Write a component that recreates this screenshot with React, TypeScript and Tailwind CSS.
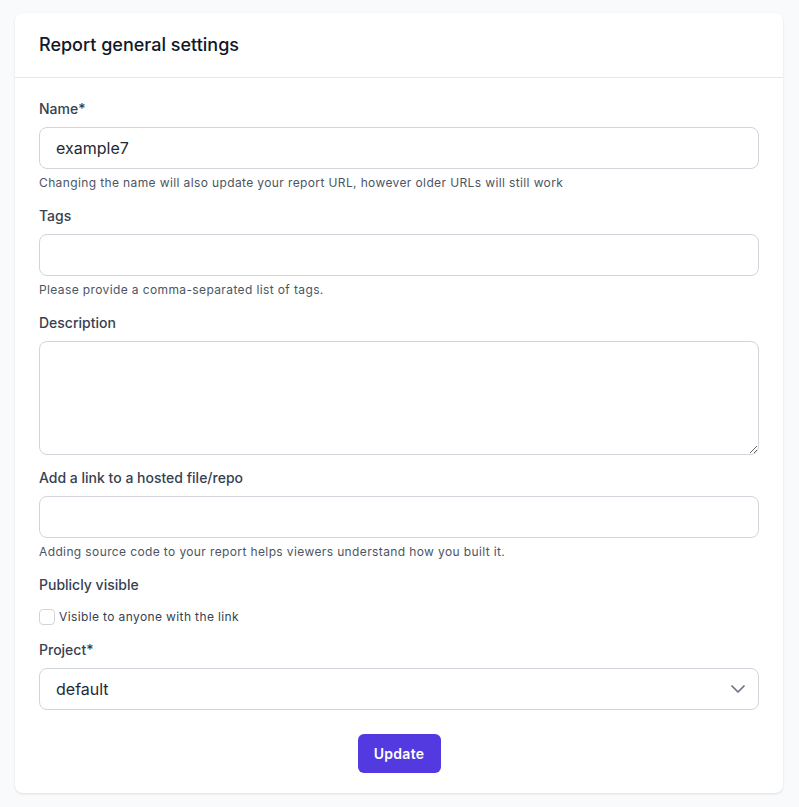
import React from "react";
import { ChevronDown } from "lucide-react";

const inputCls =
  "block w-full h-[42px] rounded-lg border border-[#d1d5db] bg-white px-4 text-[16px] text-[#1f2937] outline-none";

function Label({ children, className = "" }: { children: React.ReactNode; className?: string }) {
  return (
    <label className={`block text-[14px] leading-[20px] font-medium text-[#374151] ${className}`}>
      {children}
    </label>
  );
}

function Help({ children }: { children: React.ReactNode }) {
  return <p className="mt-1.5 text-[12px] leading-[16px] tracking-[0.38px] text-[#4b5563]">{children}</p>;
}

export default function App() {
  return (
    <div className="min-h-[807px] bg-[#f9fafb] pt-[13px] pl-[15px]" style={{ fontFamily: "Inter, 'Noto Sans', sans-serif" }}>
      <div className="w-[768px] rounded-lg bg-white shadow-[0_1px_3px_rgba(0,0,0,0.08),0_1px_2px_rgba(0,0,0,0.04)]">
        <div className="flex h-[65px] items-center border-b border-[#e5e7eb] px-6">
          <h2 className="text-[18px] leading-[28px] font-medium text-[#111827]">Report general settings</h2>
        </div>
        <div className="px-6 pt-[21px] pb-5">
          <div>
            <Label className="mb-2">Name*</Label>
            <input className={inputCls} defaultValue="example7" />
            <Help>Changing the name will also update your report URL, however older URLs will still work</Help>
          </div>
          <div className="mt-[15px]">
            <Label className="mb-2">Tags</Label>
            <input className={inputCls} />
            <Help>Please provide a comma-separated list of tags.</Help>
          </div>
          <div className="mt-[15px]">
            <Label className="mb-2">Description</Label>
            <textarea className="block w-full h-[114px] rounded-lg border border-[#d1d5db] bg-white px-4 py-2 text-[16px] text-[#1f2937] outline-none" />
          </div>
          <div className="mt-[13px]">
            <Label className="mb-2">Add a link to a hosted file/repo</Label>
            <input className={inputCls} />
            <Help>Adding source code to your report helps viewers understand how you built it.</Help>
          </div>
          <div className="mt-[15px]">
            <Label className="mb-3">Publicly visible</Label>
            <label className="flex h-[20px] items-center">
              <input
                type="checkbox"
                className="h-4 w-4 appearance-none rounded-[4px] border border-[#d1d5db] bg-white"
              />
              <span className="ml-1 text-[12px] leading-[16px] tracking-[0.38px] text-[#374151]">Visible to anyone with the link</span>
            </label>
          </div>
          <div className="mt-[13px]">
            <Label className="mb-2">Project*</Label>
            <div className="relative">
              <select className={`${inputCls} appearance-none`} defaultValue="default">
                <option value="default">default</option>
              </select>
              <ChevronDown
                size={24}
                strokeWidth={1.75}
                className="pointer-events-none absolute right-[9px] top-[9px] text-[#6b7280]"
              />
            </div>
          </div>
          <div className="mt-6 flex justify-center">
            <button className="h-[39px] w-[83px] rounded-md bg-[#5239e0] text-[14px] font-semibold tracking-[0.3px] text-white">
              Update
            </button>
          </div>
        </div>
      </div>
    </div>
  );
}
